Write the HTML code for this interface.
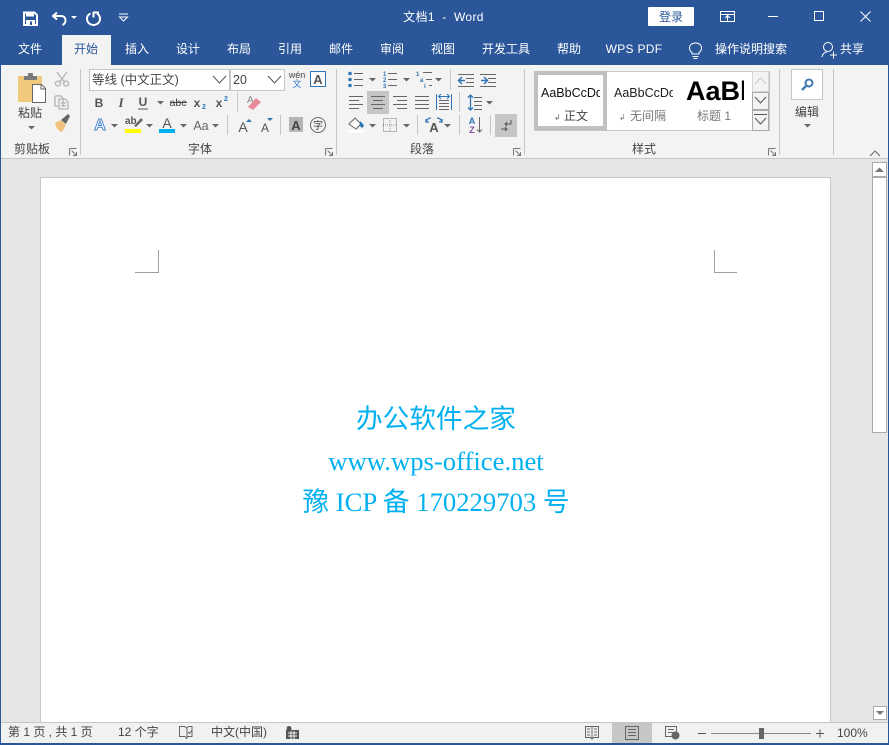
<!DOCTYPE html>
<html lang="zh"><head><meta charset="utf-8"><title>文档1 - Word</title>
<style>
html,body{margin:0;padding:0;width:889px;height:745px;overflow:hidden;background:#e6e6e6}
svg{display:block}
text{font-family:"Liberation Sans","Noto Sans CJK SC",sans-serif;font-size:12px;fill:#444}
.t{fill:#fff;text-anchor:middle}
.c{text-anchor:middle}
.ln{stroke:#666;stroke-width:1;fill:none;shape-rendering:crispEdges}
.sep{stroke:#c6c6c6;stroke-width:1;shape-rendering:crispEdges}
.doc{font-family:"Liberation Serif","Noto Sans CJK SC",serif;font-size:26.67px;fill:#00b0f0;text-anchor:middle}
</style></head><body>
<svg width="889" height="745" viewBox="0 0 889 745" xmlns="http://www.w3.org/2000/svg">
<defs>
<path id="ar" d="M0 0h7l-3.500 3.500z" fill="#666"/>
<g id="lau" fill="none" stroke="#777"><path d="M.5.500h7M.5.500v7" shape-rendering="crispEdges"/><path d="M2.500 2.500l5 5M7.500 4v3.500H4"/></g>
</defs>

<rect width="889" height="745" fill="#e6e6e6"/>
<!-- title bar -->
<rect width="889" height="65" fill="#2b579a"/>
<path d="M24 12.500h10.500l2.500 2.500v10H24z" fill="none" stroke="#fff" stroke-width="2"/>
<rect x="26" y="12" width="8" height="4.500" fill="#fff"/><rect x="26" y="20" width="9" height="5" fill="#fff"/><rect x="30" y="21.500" width="2" height="3.500" fill="#2b579a"/>
<path d="M57 12.500l-4 3.500 4 3.500M53.500 16H61c3 0 4.500 2 4.500 4.500 0 2-1 3.500-3 4.500" fill="none" stroke="#fff" stroke-width="2"/>
<path d="M71 16h6l-3 3z" fill="#fff"/>
<path d="M90.500 13.500c-2.300 1-3.500 3-3.500 5.300 0 3.500 2.800 6.200 6.500 6.200s6.500-2.700 6.500-6.200c0-2.300-1.200-4.300-3-5.300" fill="none" stroke="#fff" stroke-width="2"/>
<path d="M93.500 12v5.500M93 12.500h6" fill="none" stroke="#fff" stroke-width="2"/>
<path d="M119 14h9" stroke="#fff" fill="none"/><path d="M119.500 17h8l-4 4z" fill="none" stroke="#fff"/>
<text class="t" x="443.500" y="21" style="white-space:pre;letter-spacing:.35px">文档1  -  Word</text>
<rect x="648" y="7" width="46" height="19" rx="1" fill="#fff"/>
<text class="c" x="671" y="21" style="fill:#2b579a">登录</text>
<path d="M720.500 11.500h14v10h-14zM720.500 14.500h14M727.500 21v-5M725 18l2.500-2.500L730 18" fill="none" stroke="#fff"/>
<path d="M768 16.500h10" stroke="#fff" fill="none" shape-rendering="crispEdges"/>
<rect x="814.500" y="11.500" width="9" height="9" fill="none" stroke="#fff" shape-rendering="crispEdges"/>
<path d="M860.500 11.500l10 10M870.500 11.500l-10 10" stroke="#fff" fill="none"/>

<!-- tabs -->
<rect x="62" y="35" width="49" height="30" fill="#f3f3f3"/>
<text class="t" x="30" y="53">文件</text>
<text class="c" x="86" y="53" style="fill:#2b579a">开始</text>
<text class="t" x="137" y="53">插入</text>
<text class="t" x="188" y="53">设计</text>
<text class="t" x="239" y="53">布局</text>
<text class="t" x="290" y="53">引用</text>
<text class="t" x="341" y="53">邮件</text>
<text class="t" x="392" y="53">审阅</text>
<text class="t" x="443" y="53">视图</text>
<text class="t" x="506" y="53">开发工具</text>
<text class="t" x="569" y="53">帮助</text>
<text class="t" x="634" y="53" style="letter-spacing:.3px">WPS PDF</text>
<path d="M693 56.500h6M694 58.500h4M692.500 54v-1.500c-1.500-1-2.500-2.500-2.500-4.500 0-3 2.500-5 6-5s6 2 6 5c0 2-1 3.500-2.500 4.500V54z" fill="none" stroke="#fff" transform="translate(-.5 0)"/>
<text class="t" x="751" y="53">操作说明搜索</text>
<circle cx="828" cy="47" r="4.500" fill="none" stroke="#fff"/>
<path d="M822 57c.5-3 2.500-5 5-5M830 55h7M833.500 51.500v7" fill="none" stroke="#fff"/>
<text class="t" x="852" y="53">共享</text>

<!-- ribbon -->
<rect x="0" y="65" width="889" height="93" fill="#f3f3f3"/>
<rect y="158" width="889" height="1" fill="#c6c6c6"/>
<line class="sep" x1="80.500" y1="69" x2="80.500" y2="155"/>
<line class="sep" x1="336.500" y1="69" x2="336.500" y2="155"/>
<line class="sep" x1="524.500" y1="69" x2="524.500" y2="155"/>
<line class="sep" x1="779.500" y1="69" x2="779.500" y2="155"/>
<line class="sep" x1="833.500" y1="69" x2="833.500" y2="155"/>

<!-- clipboard -->
<rect x="18" y="76" width="24" height="26" rx="1" fill="#f0c97d"/>
<rect x="24" y="76" width="13" height="4" fill="#7b7b7b"/><rect x="28" y="73" width="5" height="5" rx="1" fill="#7b7b7b"/>
<path d="M32.500 84.500h9l4 4v14h-13z" fill="#fff" stroke="#666"/><path d="M41 85v4h4" fill="none" stroke="#666"/>
<text class="c" x="30" y="117">粘贴</text>
<use href="#ar" x="28" y="126"/>
<text class="c" x="32" y="153">剪贴板</text>
<use href="#lau" x="69" y="148"/>
<g fill="none" stroke="#b5b5b5" stroke-width="1.300">
<path d="M57 72l8 11M67 72l-8 11"/><circle cx="58" cy="83.500" r="2.500"/><circle cx="66" cy="83.500" r="2.500"/>
<path d="M55 96h6l2 2v8M58 96v-1M55 96v10h3"/><path d="M59 99h6l3 3v7h-9zM61 103h5M61 106h5" />
</g>
<path d="M55 123l6-3 5 5-4 7c-3-.5-6-4-7-9z" fill="#eec27d"/>
<path d="M61 120l7-6 2 2-4 8z" fill="#666"/>

<!-- font -->
<rect x="89.500" y="69.500" width="140" height="21" fill="#fff" stroke="#c6c6c6" shape-rendering="crispEdges"/>
<rect x="230.500" y="69.500" width="54" height="21" fill="#fff" stroke="#c6c6c6" shape-rendering="crispEdges"/>
<text x="92" y="84" style="font-size:12.500px">等线 (中文正文)</text>
<text x="233" y="84" style="font-size:12.500px">20</text>
<path d="M213 76l6.500 7 6.500-7M268 76l6.500 7 6.500-7" fill="none" stroke="#555"/>
<text class="c" x="297" y="78" style="font-size:9px">wén</text>
<text class="c" x="297" y="87" style="font-size:9px;fill:#2b7cd3">文</text>
<rect x="310.500" y="71.500" width="15" height="15" fill="#fff" stroke="#2e75b6"/>
<text class="c" x="318" y="84" style="font-size:13px;font-weight:bold;fill:#555">A</text>

<text class="c" x="99" y="107" style="font-size:12px;font-weight:bold;fill:#555">B</text>
<text class="c" x="121" y="107" style="font-family:'Liberation Serif';font-style:italic;font-size:13px;font-weight:bold;fill:#555">I</text>
<text class="c" x="143" y="106" style="font-size:12px;font-weight:bold;fill:#555">U</text>
<path d="M138 109h10" stroke="#555" fill="none"/>
<use href="#ar" x="157" y="101"/>
<text class="c" x="178" y="106" style="font-size:10.500px">abc</text><path d="M170 102.500h17" stroke="#444" fill="none"/>
<text class="c" x="197" y="107" style="font-size:12px;font-weight:bold;fill:#555">x</text><text x="202" y="109" style="font-size:7px;fill:#2e75b6;font-weight:bold">2</text>
<text class="c" x="219" y="107" style="font-size:12px;font-weight:bold;fill:#555">x</text><text x="224" y="101" style="font-size:7px;fill:#2e75b6;font-weight:bold">2</text>
<line class="sep" x1="237.500" y1="92" x2="237.500" y2="112"/>
<text x="247" y="103" style="font-size:10px;fill:#888">A</text>
<path d="M248 107l8-9 5 4-8 8z" fill="#e98a9b"/>

<text class="c" x="100" y="130" style="font-size:16px;font-weight:bold;fill:#fff;stroke:#4f86c6;stroke-width:1">A</text>
<use href="#ar" x="111" y="124"/>
<text x="125" y="124" style="font-size:10px;font-weight:bold;fill:#555">ab</text><path d="M134 126l7-8 2 2-7 7z" fill="#666"/>
<rect x="125" y="129" width="16" height="4" fill="#ffff00"/>
<use href="#ar" x="146" y="124"/>
<text class="c" x="167" y="128" style="font-size:14px;fill:#555">A</text>
<rect x="159" y="129" width="16" height="4" fill="#00b0f0"/>
<use href="#ar" x="180" y="124"/>
<text class="c" x="201" y="130" style="font-size:12.500px;fill:#666">Aa</text>
<use href="#ar" x="212" y="124"/>
<line class="sep" x1="227.500" y1="115" x2="227.500" y2="135"/>
<text class="c" x="243" y="132" style="font-size:14px;fill:#555">A</text><path d="M246 122h6l-3-3z" fill="#2e75b6"/>
<text class="c" x="265" y="132" style="font-size:12px;fill:#555">A</text><path d="M267 118h6l-3 3z" fill="#2e75b6"/>
<line class="sep" x1="280.500" y1="115" x2="280.500" y2="135"/>
<rect x="289" y="117" width="14" height="15" fill="#b5b5b5"/>
<text class="c" x="296" y="130" style="font-size:13px;font-weight:bold">A</text>
<circle cx="318" cy="125" r="7.500" fill="none" stroke="#666"/>
<text class="c" x="318" y="129" style="font-size:10px">字</text>
<text class="c" x="200" y="153">字体</text>
<use href="#lau" x="325" y="148"/>

<!-- paragraph -->
<g class="ln">
<path d="M354 73.500h9M354 79.500h9M354 85.500h9M388 73.500h9M388 79.500h9M388 85.500h9"/>
<path d="M423 72.500h9M426 79.500h6M429 85.500h3"/>
<path d="M458 74.500h16M466 78.500h8M466 82.500h8M458 86.500h16M480 74.500h16M488 78.500h8M488 82.500h8M480 86.500h16" stroke="#666"/>
<path d="M349 96.500h14M349 100.500h10M349 104.500h14M349 108.500h10"/>
<path d="M393 96.500h14M397 100.500h10M393 104.500h14M397 108.500h10"/>
<path d="M415 96.500h14M415 100.500h14M415 104.500h14M415 108.500h14"/>
<path d="M474 97.500h8M474 101.500h8M474 105.500h8M474 109.500h8"/>
</g>
<g fill="#2e75b6"><circle cx="350" cy="73.500" r="1.800"/><circle cx="350" cy="79.500" r="1.800"/><circle cx="350" cy="85.500" r="1.800"/></g>
<g><text x="383" y="76" style="font-size:6px;fill:#2e75b6;font-weight:bold">1</text><text x="383" y="82" style="font-size:6px;fill:#2e75b6;font-weight:bold">2</text><text x="383" y="88" style="font-size:6px;fill:#2e75b6;font-weight:bold">3</text><text x="416" y="76" style="font-size:6px;fill:#2e75b6;font-weight:bold">1</text><text x="420" y="82" style="font-size:6px;fill:#2e75b6;font-weight:bold">a</text><text x="424" y="88" style="font-size:6px;fill:#2e75b6;font-weight:bold">i</text></g>
<use href="#ar" x="369" y="78"/><use href="#ar" x="403" y="78"/><use href="#ar" x="435" y="78"/>
<line class="sep" x1="450.500" y1="69" x2="450.500" y2="90"/>
<path d="M465 80.500h-6M462 77l-3.500 3.500L462 84M481 80.500h6M484 77l3.500 3.500L484 84" fill="none" stroke="#2e75b6" stroke-width="1.500"/>
<rect x="367" y="91" width="22" height="23" fill="#c6c6c6"/>
<path class="ln" d="M371 96.500h14M373 100.500h10M371 104.500h14M373 108.500h10"/>
<path d="M436.500 94v16M451.500 94v16" stroke="#2e75b6" fill="none"/>
<path class="ln" d="M439 100.500h10M439 103.500h10M439 106.500h10M439 109.500h10"/>
<path d="M439 96.500h10M441 94l-2.500 2.500L441 99M447 94l2.500 2.500L447 99" fill="none" stroke="#2e75b6"/>
<line class="sep" x1="459.500" y1="92" x2="459.500" y2="112"/>
<path d="M470.500 95v15M468 97.500l2.500-2.500 2.500 2.500M468 107.500l2.500 2.500 2.500-2.500" fill="none" stroke="#2e75b6" stroke-width="1.300"/>
<use href="#ar" x="486" y="101"/>
<path d="M349 124l6-6 6 6-5 5z" fill="#fff" stroke="#666"/><path d="M360 121l4 4-1.500 3-3-2z" fill="#2e75b6"/>
<rect x="348" y="130" width="16" height="3" fill="#fff"/>
<use href="#ar" x="369" y="124"/>
<rect x="383.500" y="118.500" width="13" height="13" fill="none" stroke="#777" stroke-dasharray="1 1"/>
<path d="M390 118v13M383 125h13" stroke="#999" stroke-dasharray="1 1" fill="none"/>
<use href="#ar" x="403" y="124"/>
<line class="sep" x1="417.500" y1="115" x2="417.500" y2="135"/>
<text class="c" x="434" y="132" style="font-size:13px;font-weight:bold;fill:#555">A</text>
<path d="M426 122c1-3 3-4 5-4M442 122c-1-3-3-4-5-4M426 119v3h3M442 119v3h-3" fill="none" stroke="#2e75b6" stroke-width="1.300"/>
<use href="#ar" x="444" y="124"/>
<line class="sep" x1="459.500" y1="115" x2="459.500" y2="135"/>
<text class="c" x="472" y="124" style="font-size:9px;font-weight:bold;fill:#2e75b6">A</text>
<text class="c" x="472" y="133" style="font-size:9px;font-weight:bold;fill:#7f4f9f">Z</text>
<path d="M479.500 117v15M477 129.500l2.500 2.500 2.500-2.500" stroke="#666" fill="none"/>
<line class="sep" x1="490.500" y1="115" x2="490.500" y2="135"/>
<rect x="495" y="114" width="22" height="23" fill="#c6c6c6"/>
<path d="M511 120v4h-6M507 122l-2 2 2 2M501 129h6M505 127l2 2-2 2" fill="none" stroke="#555"/>
<text class="c" x="422" y="153">段落</text>
<use href="#lau" x="513" y="148"/>

<!-- styles -->
<rect x="534.500" y="71.500" width="235" height="59" fill="#fff" stroke="#c6c6c6" shape-rendering="crispEdges"/>
<rect x="536" y="73" width="69" height="55" fill="#fff" stroke="#c0c0c0" stroke-width="4"/>
<svg x="541" y="85" width="59" height="20"><text x="0" y="12" style="font-size:12.500px;fill:#111">AaBbCcDd</text></svg>
<svg x="614" y="85" width="59" height="20"><text x="0" y="12" style="font-size:12.500px;fill:#222">AaBbCcDd</text></svg>
<svg x="686" y="76" width="58" height="32"><text x="0" y="24" style="font-size:27px;font-weight:bold;fill:#000">AaBbC</text></svg>
<text x="554" y="120" style="font-size:8px;fill:#666">↲</text>
<text class="c" x="576" y="120">正文</text>
<text x="619" y="120" style="font-size:8px;fill:#777">↲</text>
<text class="c" x="648" y="120" style="fill:#777">无间隔</text>
<text class="c" x="714" y="120" style="fill:#777">标题 1</text>
<rect x="752.500" y="71.500" width="16" height="20" fill="#f3f3f3" stroke="#d5d5d5"/>
<rect x="752.500" y="92.500" width="16" height="17" fill="#f3f3f3" stroke="#aaa"/>
<rect x="752.500" y="110.500" width="16" height="20" fill="#f3f3f3" stroke="#aaa"/>
<path d="M755 84l5.500-6 5.500 6" fill="none" stroke="#c6c6c6"/>
<path d="M755 97l5.500 6 5.500-6M755 118l5.500 6 5.500-6" fill="none" stroke="#555"/>
<path d="M754 114.500h13" stroke="#555" fill="none"/>
<text class="c" x="644" y="153">样式</text>
<use href="#lau" x="768" y="148"/>

<!-- edit -->
<rect x="791.500" y="69.500" width="31" height="30" fill="#fff" stroke="#c6c6c6"/>
<circle cx="809" cy="83" r="3.500" fill="none" stroke="#3f79b5" stroke-width="2"/>
<path d="M806 86l-4 4" stroke="#3f79b5" stroke-width="2.500" fill="none"/>
<text class="c" x="807" y="116">编辑</text>
<use href="#ar" x="804" y="124"/>
<path d="M870 156l5-5 5 5" fill="none" stroke="#666"/>

<!-- page -->
<rect x="40.500" y="177.500" width="790" height="550" fill="#fff" stroke="#c6c6c6" shape-rendering="crispEdges"/>
<path d="M158.500 250v22.500H135M714.500 250v22.500H737" fill="none" stroke="#a0a0a0" shape-rendering="crispEdges"/>
<text class="doc" x="436" y="428">办公软件之家</text>
<text class="doc" x="436" y="470">www.wps-office.net</text>
<text class="doc" x="436" y="511">豫 ICP 备 170229703 号</text>

<!-- scrollbar -->
<rect x="872.500" y="162.500" width="14" height="14" fill="#fff" stroke="#ababab"/>
<path d="M875 172h9l-4.500-4.500z" fill="#777"/>
<rect x="872.500" y="177.500" width="14" height="255" fill="#fff" stroke="#ababab"/>
<rect x="873.500" y="706.500" width="13" height="13" fill="#fff" stroke="#ababab"/>
<path d="M876 711h8l-4 4z" fill="#777"/>

<!-- side borders -->
<rect x="0" y="0" width="1" height="745" fill="#2b579a"/>
<rect x="888" y="0" width="1" height="745" fill="#2b579a"/>

<!-- status bar -->
<rect x="1" y="722" width="887" height="21" fill="#f1f1f1"/>
<rect x="1" y="722" width="887" height="1" fill="#c6c6c6"/>
<rect y="743" width="889" height="2" fill="#2b579a"/>
<text x="8" y="736" style="font-size:12px;white-space:pre">第 1 页 , 共 1 页</text>
<text x="118" y="736" style="font-size:12px">12 个字</text>
<path d="M179.500 726.500h5l2 1.500 2-1.500h3.500v10h-4l-1.500 2-1.500-2h-5.500z" fill="none" stroke="#666"/>
<path d="M187 728v9M188 732l1.500 1.500 3-4" fill="none" stroke="#666"/>
<text x="211" y="736" style="font-size:12px">中文(中国)</text>
<circle cx="289" cy="728.500" r="2.500" fill="#555"/>
<rect x="286" y="730" width="13" height="9" fill="#555"/>
<path d="M288 733h9M288 736h9M291 731v8M294 731v8" stroke="#f1f1f1" fill="none"/>
<path d="M585.500 726.500h13v11h-5l-1.500 1.500-1.500-1.500h-5zM592 727v11M587 729h3M587 732h3M587 735h3M594 729h3M594 732h3M594 735h3" fill="none" stroke="#666" shape-rendering="crispEdges"/>
<rect x="612" y="723" width="40" height="20" fill="#c6c6c6"/>
<path d="M625.500 726.500h13v13h-13zM628 729.500h8M628 732.500h8M628 735.500h8" fill="none" stroke="#666" shape-rendering="crispEdges"/>
<path d="M665.500 726.500h11v10h-11zM668 729.500h6M668 732.500h6" fill="none" stroke="#666"/>
<circle cx="675.500" cy="735.500" r="4" fill="#666"/>
<path d="M711 733.500h100" stroke="#888" fill="none" shape-rendering="crispEdges"/>
<path d="M698 733.500h8M816 733.500h8M820 729.500v8" stroke="#555" fill="none" shape-rendering="crispEdges"/>
<rect x="759" y="728" width="5" height="11" fill="#666"/>
<text x="837" y="737" style="font-size:12px">100%</text>
</svg>
</body></html>
